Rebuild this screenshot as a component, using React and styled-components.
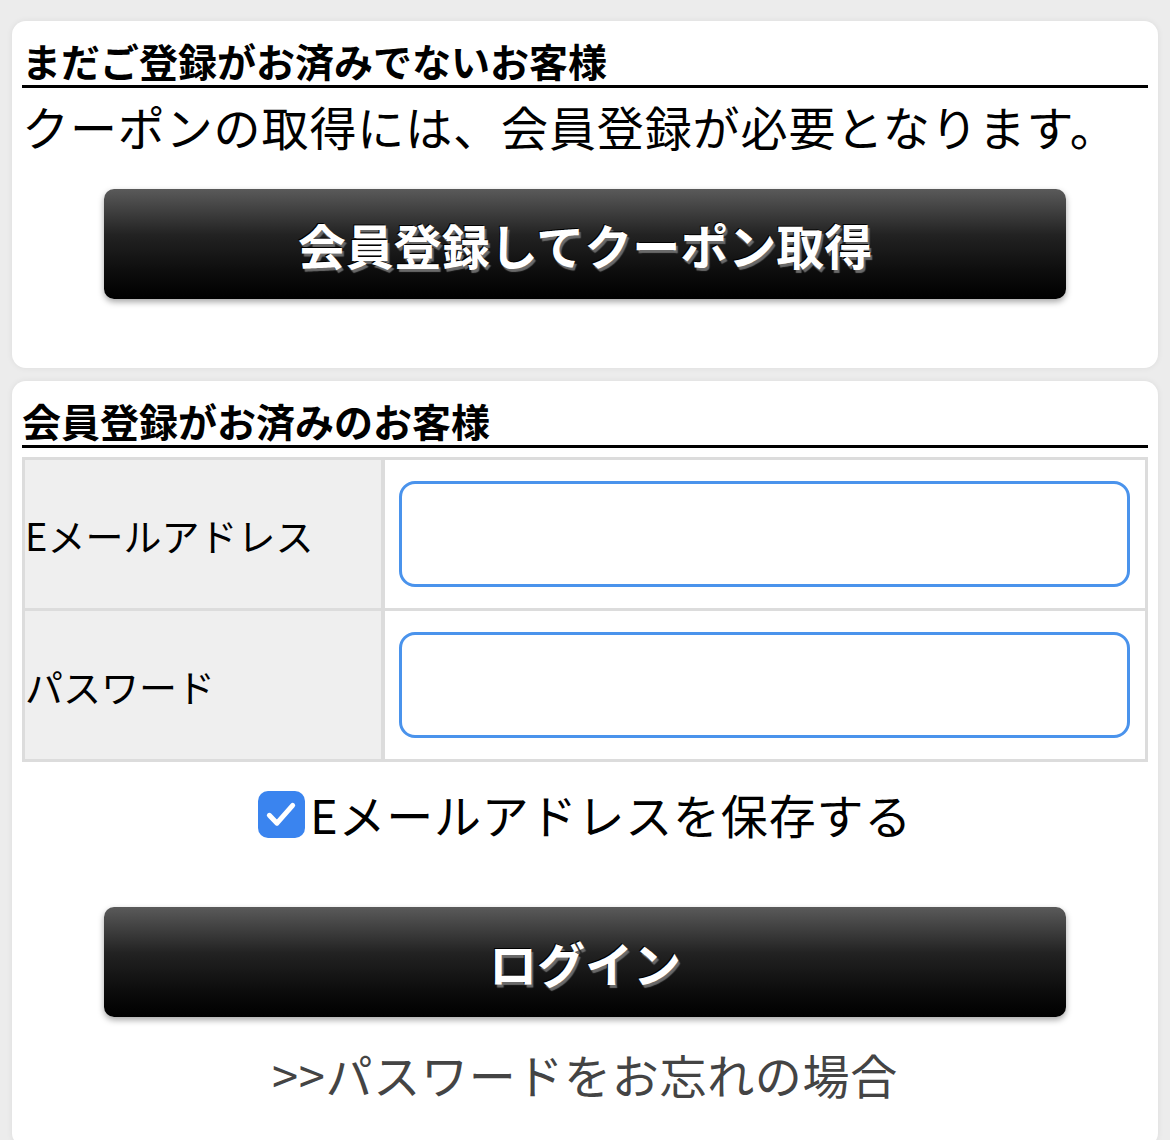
import React from 'react';
import styled, { createGlobalStyle } from 'styled-components';

const GlobalStyle = createGlobalStyle`
  body {
    margin: 0;
    background: #ececec;
    font-family: "Noto Sans CJK JP", "Noto Sans", sans-serif;
    color: #000;
  }
`;

const Page = styled.main`
  display: flex;
  flex-direction: column;
  gap: 13px;
  padding: 21px 12px 0;
`;

const Card = styled.section`
  background: #fff;
  border-radius: 14px;
  box-shadow: 0 0 6px rgba(0, 0, 0, 0.07);
  padding: 0 10px ${(p) => p.$bottom || 0}px;
`;

const Heading = styled.h2`
  margin: 0;
  padding-top: 14px;
  font-size: 39px;
  line-height: 50px;
  font-weight: 700;
  border-bottom: 3px solid #000;
`;

const Lead = styled.p`
  margin: 5px 0 0;
  font-size: 47px;
  letter-spacing: 0.9px;
  line-height: 66px;
  white-space: nowrap;
`;

const DarkButton = styled.button`
  display: block;
  width: 962px;
  height: 110px;
  margin: ${(p) => p.$top}px auto 0;
  border: none;
  border-radius: 10px;
  background: linear-gradient(#5a5a5a 0%, #222 42%, #0a0a0a 80%, #000 100%);
  box-shadow: 0 3px 6px rgba(0, 0, 0, 0.35);
  color: #fff;
  font-family: inherit;
  font-size: 48px;
  font-weight: 700;
  text-shadow: -1px -1px 0 #000, 2px 3px 1px #6a6a6a;
  cursor: pointer;
`;

const FormGrid = styled.div`
  display: grid;
  grid-template-columns: 356px 1fr;
  grid-auto-rows: 148px;
  gap: 3px 4px;
  padding: 3px;
  margin-top: 9px;
  background: #dcdcdc;
`;

const Label = styled.div`
  display: flex;
  align-items: center;
  padding-left: 0;
  background: #efefef;
  font-size: 38px;
`;

const Field = styled.div`
  display: flex;
  align-items: center;
  padding: 0 15px 0 14px;
  background: #fff;
`;

const Input = styled.input`
  box-sizing: border-box;
  width: 100%;
  height: 106px;
  border: 3px solid #4a93ec;
  border-radius: 16px;
  outline: none;
  font-size: 38px;
  padding: 0 16px;
`;

const CheckRow = styled.label`
  display: flex;
  justify-content: center;
  align-items: center;
  gap: 5px;
  margin-top: 19px;
  font-size: 47px;
  letter-spacing: 0.8px;
  line-height: 66px;
  cursor: pointer;
`;

const Box = styled.span`
  display: inline-flex;
  align-items: center;
  justify-content: center;
  width: 47px;
  height: 47px;
  border-radius: 10px;
  background: #3a84ef;
`;

const ForgotLink = styled.a`
  display: block;
  margin-top: 24px;
  text-align: center;
  font-size: 47px;
  letter-spacing: 0.7px;
  line-height: 66px;
  color: #444;
  text-decoration: none;
`;

export default function App() {
  return (
    <>
      <GlobalStyle />
      <Page>
        <Card $bottom={69}>
          <Heading>まだご登録がお済みでないお客様</Heading>
          <Lead>クーポンの取得には、会員登録が必要となります。</Lead>
          <DarkButton $top={30}>会員登録してクーポン取得</DarkButton>
        </Card>
        <Card $bottom={40}>
          <Heading>会員登録がお済みのお客様</Heading>
          <FormGrid>
            <Label>Eメールアドレス</Label>
            <Field>
              <Input type="email" />
            </Field>
            <Label>パスワード</Label>
            <Field>
              <Input type="password" />
            </Field>
          </FormGrid>
          <CheckRow>
            <Box>
              <svg width="40" height="40" viewBox="0 0 24 24" fill="none">
                <path
                  d="M5 12.8l4.6 4.7L19 6.8"
                  stroke="#fff"
                  strokeWidth="3"
                  strokeLinecap="round"
                  strokeLinejoin="round"
                />
              </svg>
            </Box>
            Eメールアドレスを保存する
          </CheckRow>
          <DarkButton $top={60}>ログイン</DarkButton>
          <ForgotLink href="#">&gt;&gt;パスワードをお忘れの場合</ForgotLink>
        </Card>
      </Page>
    </>
  );
}
